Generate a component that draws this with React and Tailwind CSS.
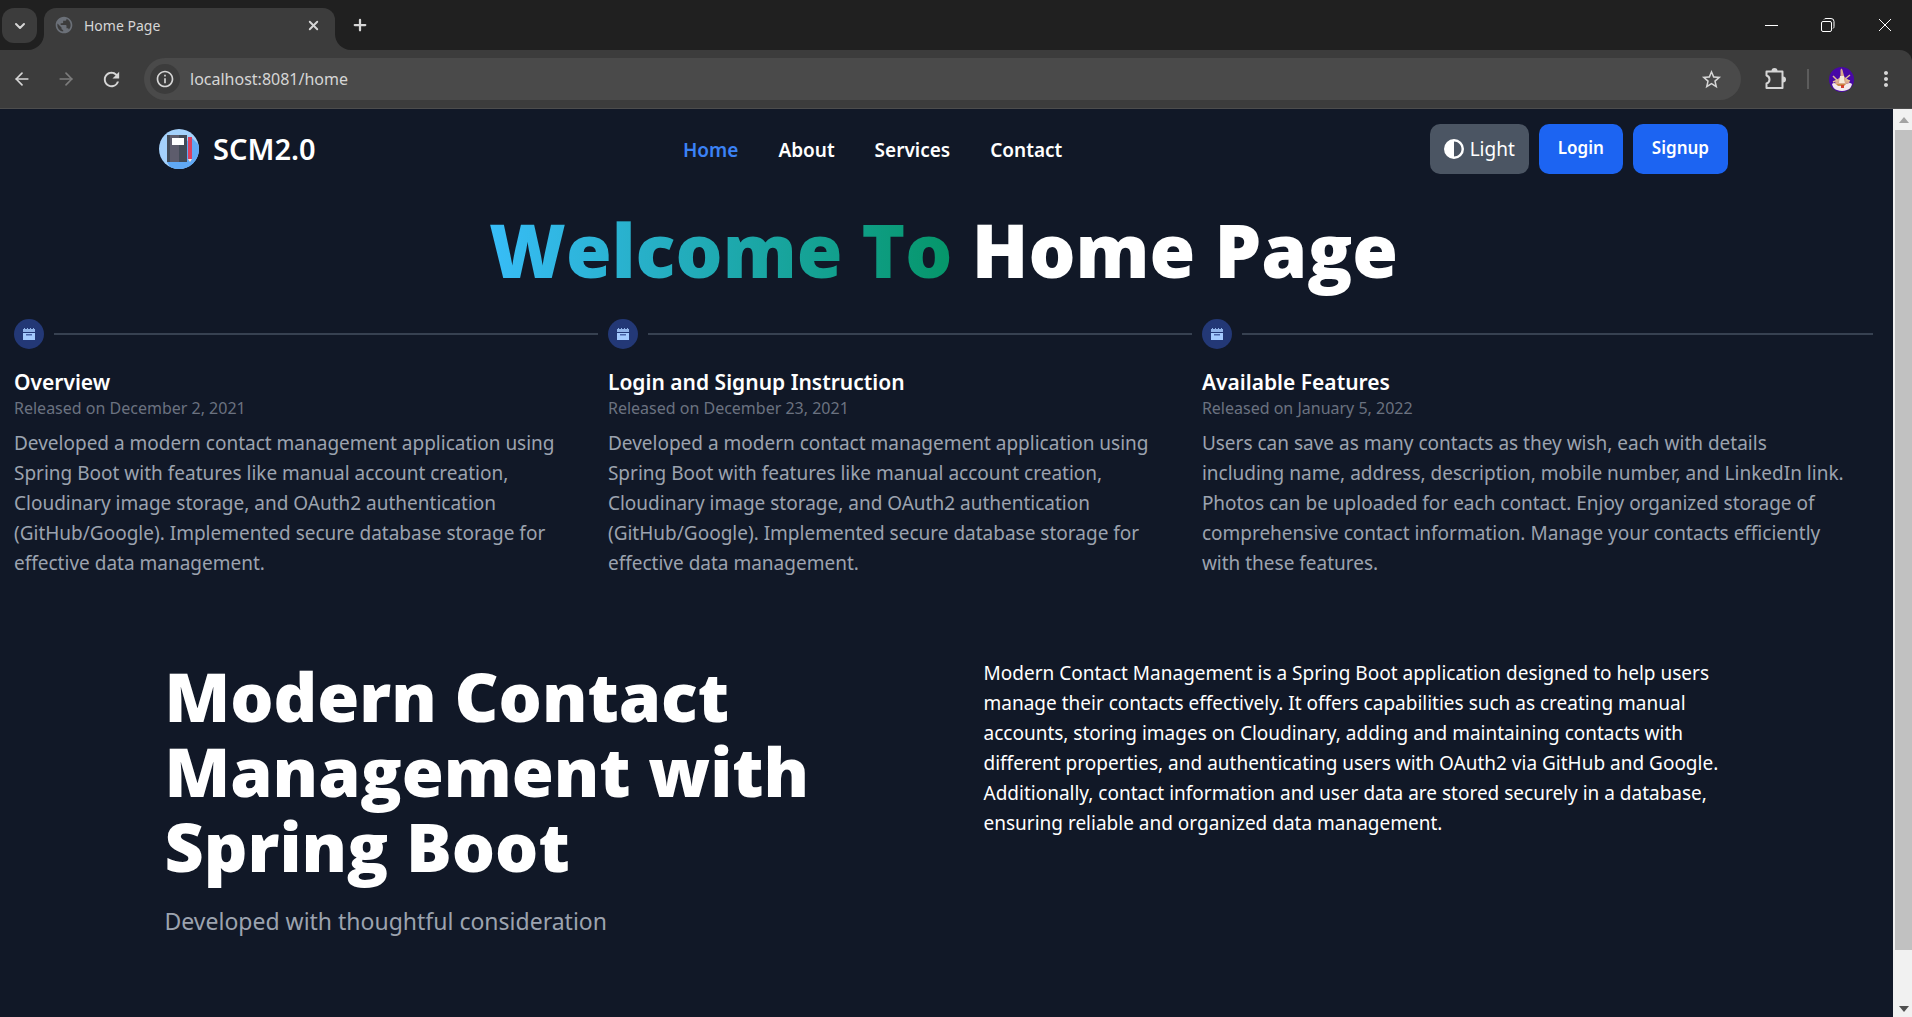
import { ChevronDown, X, Plus, ArrowLeft, ArrowRight } from "lucide-react";
import { MdRefresh, MdStarOutline, MdMoreVert, MdPublic, MdOutlineInfo } from "react-icons/md";
import { FaCircleHalfStroke } from "react-icons/fa6";

const developed =
  "Developed a modern contact management application using Spring Boot with features like manual account creation, Cloudinary image storage, and OAuth2 authentication (GitHub/Google). Implemented secure database storage for effective data management.";

const releases = [
  { title: "Overview", date: "Released on December 2, 2021", text: developed },
  { title: "Login and Signup Instruction", date: "Released on December 23, 2021", text: developed },
  {
    title: "Available Features",
    date: "Released on January 5, 2022",
    text: "Users can save as many contacts as they wish, each with details including name, address, description, mobile number, and LinkedIn link. Photos can be uploaded for each contact. Enjoy organized storage of comprehensive contact information. Manage your contacts efficiently with these features.",
  },
];

function Logo() {
  return (
    <svg viewBox="0 0 40 40" className="size-10" aria-hidden="true">
      <defs>
        <clipPath id="disc">
          <circle cx="20" cy="20" r="20" />
        </clipPath>
      </defs>
      <g clipPath="url(#disc)">
        <rect width="40" height="40" fill="#a4d1fb" />
        <path d="M32 8 40 16V40H12L8 33Z" fill="#60a9f6" />
        <rect x="8" y="6" width="20" height="27" fill="#434b57" />
        <rect x="11" y="6" width="9" height="27" fill="#5d5c6c" />
        <rect x="13" y="9" width="12" height="7" fill="#fff" />
        <rect x="29" y="8" width="4" height="22" fill="#db405f" />
        <path d="M29 30h4l-2 3Z" fill="#fbe6da" />
      </g>
    </svg>
  );
}

function Avatar() {
  return (
    <svg viewBox="0 0 25 25" className="size-[25px]" aria-hidden="true">
      <circle cx="12.5" cy="12.5" r="12.5" fill="#4808a6" />
      <path d="M3 17q2-2 5 0l9 0q4-2 6 0q-1 5-5 6-5 2-10 0-4-1-5-6Z" fill="#f3e9ee" />
      <path d="M11.500 3q1-3 2 0l1 4 1 3 4 3 1 3-7 2-8-1 2-4 4-3 0-4Z" fill="#dba98c" />
      <path d="M11 9h4v4l1 3h-6Z" fill="#f6ead8" />
      <path d="M4 9l4 4M21 8l-5 4M4 15l5-2M21 14l-4-1" stroke="#e0bf95" strokeWidth="1.500" />
      <path d="M7 17h10l-2 2H9Z" fill="#c98a45" />
      <rect x="12" y="18" width="3" height="3" fill="#d3402f" />
    </svg>
  );
}

function Extension() {
  return (
    <svg viewBox="0 0 24 24" className="size-6" fill="none" aria-hidden="true">
      <path
        d="M3.500 4.500H19.500V21H3.500V16.500Q6.500 15.500 6.500 12.500Q6.500 9.500 3.500 8.500Z"
        stroke="currentColor"
        strokeWidth="2"
        strokeLinejoin="round"
      />
      <path d="M8.500 4a3 3 0 0 1 6 0ZM20 9.500a3 3 0 0 1 0 6Z" fill="currentColor" />
    </svg>
  );
}

function Calendar() {
  return (
    <svg viewBox="0 0 12 12" className="size-3" fill="currentColor" aria-hidden="true">
      <path d="M0 4V1h1V0h1v1h2V0h1v1h2V0h1v1h2V0h1v1h1v3Z" opacity=".85" />
      <path d="M0 5h12v7H0Z" />
      <path d="M3 6h6v1.500H3Z" className="text-[#4a64a8]" />
    </svg>
  );
}

function WindowControls() {
  return (
    <div className="flex h-[50px] items-center gap-[41px] pr-[19px] text-white">
      <button aria-label="Minimize">
        <svg viewBox="0 0 16 16" className="size-4" stroke="currentColor" fill="none">
          <path d="M2 8.500h13" />
        </svg>
      </button>
      <button aria-label="Restore">
        <svg viewBox="0 0 16 16" className="size-4" stroke="currentColor" fill="none">
          <rect x="1.500" y="4.500" width="10" height="10" rx="1.500" />
          <path d="M4 2.500q.5-1 2-1h5q3 0 3 3v5q0 1.500-1 2" />
        </svg>
      </button>
      <button aria-label="Close">
        <svg viewBox="0 0 16 16" className="size-4" stroke="currentColor" fill="none">
          <path d="M2 2l12 12M14 2 2 14" />
        </svg>
      </button>
    </div>
  );
}

function Browser() {
  return (
    <header className="bg-[#202020] text-[#d6d6d6]">
      <div className="flex h-[50px] justify-between">
        <div className="flex">
          <div className="bg-[#3c3c3c]">
            <div className="h-[50px] w-11 rounded-br-2xl bg-[#202020] pt-2 pl-0.5">
              <button aria-label="Search tabs" className="flex size-[35px] items-center justify-center rounded-xl bg-[#3c3c3c]">
                <ChevronDown size={16} strokeWidth={3} />
              </button>
            </div>
          </div>
          <div className="mt-2 flex w-[291px] items-center rounded-t-xl bg-[#3c3c3c] pr-3 pb-2 pl-2.5">
            <MdPublic size={20} className="text-[#6b7078]" />
            <span className="ml-2.5 flex-1 text-[14px]">Home Page</span>
            <button aria-label="Close tab" className="p-0.5">
              <X size={15} strokeWidth={3} />
            </button>
          </div>
          <div className="bg-[#3c3c3c]">
            <div className="flex h-[50px] items-center rounded-bl-2xl bg-[#202020] pl-4">
              <button aria-label="New tab">
                <Plus size={18} strokeWidth={3} />
              </button>
            </div>
          </div>
        </div>
        <WindowControls />
      </div>
      <div className="flex h-[59px] items-center rounded-tr-xl border-b border-[#4d4d4d] bg-[#3c3c3c] pr-3.5 pl-3">
        <button aria-label="Back" className="mr-6">
          <ArrowLeft size={20} />
        </button>
        <button aria-label="Forward" className="mr-6 text-[#7c7c7c]">
          <ArrowRight size={20} />
        </button>
        <button aria-label="Reload" className="mr-[21px]">
          <MdRefresh size={23} />
        </button>
        <div className="flex h-[42px] flex-1 items-center rounded-full bg-[#4a4a4a] px-1.5">
          <button aria-label="Site information" className="flex size-[30px] items-center justify-center rounded-full bg-[#3c3c3c]">
            <MdOutlineInfo size={20} />
          </button>
          <input
            aria-label="Address"
            defaultValue="localhost:8081/home"
            className="ml-2.5 min-w-0 flex-1 bg-transparent text-[16px] outline-none"
          />
          <button aria-label="Bookmark" className="mr-3">
            <MdStarOutline size={23} />
          </button>
        </div>
        <button aria-label="Extensions" className="ml-[22px]">
          <Extension />
        </button>
        <span className="mx-5 h-5 w-0.5 bg-[#5c5c5c]" />
        <button aria-label="Profile">
          <Avatar />
        </button>
        <button aria-label="Menu" className="ml-5">
          <MdMoreVert size={24} />
        </button>
      </div>
    </header>
  );
}

function Scrollbar() {
  return (
    <div className="flex w-[19px] flex-col bg-[#f1f1f1] pl-0.5">
      <button aria-label="Scroll up" className="flex h-[21px] items-center justify-center text-[#a3a3a3]">
        <svg viewBox="0 0 10 6" className="h-1.5 w-2.5" fill="currentColor">
          <path d="M0 6 5 0l5 6Z" />
        </svg>
      </button>
      <div className="flex-[16] bg-[#c1c1c1]" />
      <div className="flex-1" />
      <button aria-label="Scroll down" className="flex h-4 items-center justify-center text-[#505050]">
        <svg viewBox="0 0 10 6" className="h-1.5 w-2.5" fill="currentColor">
          <path d="M0 0 5 6l5-6Z" />
        </svg>
      </button>
    </div>
  );
}

export default function App() {
  return (
    <div className="flex min-h-screen flex-col bg-[#111827] font-['Noto_Sans','Open_Sans',sans-serif] text-white">
      <Browser />
      <div className="flex flex-1">
        <main className="min-w-0 flex-1 pr-1.5">
          <nav className="mx-auto flex max-w-[1569px] items-center justify-between pt-[15px]">
            <a href="#" className="flex items-center gap-3.5">
              <Logo />
              <span className="text-[29px] leading-9 font-semibold">SCM2.0</span>
            </a>
            <div className="flex gap-10 pt-0.5 text-[19px] font-semibold">
              <a href="#" className="text-[#3b82f6]">Home</a>
              <a href="#">About</a>
              <a href="#">Services</a>
              <a href="#">Contact</a>
            </div>
            <div className="flex gap-2.5">
              <button className="flex h-[50px] items-center gap-1.5 rounded-[10px] bg-[#4b5563] px-3.5 text-[19px]">
                <FaCircleHalfStroke size={20} />
                Light
              </button>
              <button className="h-[50px] rounded-[10px] bg-[#1c64f2] px-[19px] pb-0.5 text-[17px] font-semibold">Login</button>
              <button className="h-[50px] rounded-[10px] bg-[#1c64f2] px-[19px] pb-0.5 text-[17px] font-semibold">Signup</button>
            </div>
          </nav>
          <h1 className="mt-[38px] text-center font-['Open_Sans','Noto_Sans',sans-serif] text-[74px] leading-[75px] font-black">
            <span className="bg-linear-to-r/srgb from-[#38bdf8] to-[#059669] bg-clip-text text-transparent">Welcome To</span> Home Page
          </h1>
          <ol className="mt-8 flex px-3.5">
            {releases.map((r) => (
              <li key={r.title} className="group flex-1 last:flex-[1.13]">
                <div className="flex items-center gap-2.5 pr-2.5 group-last:pr-0">
                  <span className="flex size-[30px] items-center justify-center rounded-full bg-[#233876] text-[#a4cafe]">
                    <Calendar />
                  </span>
                  <span className="h-0.5 flex-1 bg-[#374151]" />
                </div>
                <h3 className="mt-[19px] text-[21px] leading-7 font-semibold">{r.title}</h3>
                <time className="block text-[16px] leading-6 text-[#6b7280]">{r.date}</time>
                <p className="mt-2 pr-6 text-[19px] leading-[30px] text-[#9ca3af]">{r.text}</p>
              </li>
            ))}
          </ol>
          <section className="mx-auto mt-20 grid max-w-[1558px] grid-cols-[819px_1fr]">
            <div>
              <h2 className="font-['Open_Sans','Noto_Sans',sans-serif] text-[68px] leading-[75px] font-black">
                Modern Contact Management with Spring Boot
              </h2>
              <p className="mt-5 text-[23px] leading-9 text-[#9ca3af]">Developed with thoughtful consideration</p>
            </div>
            <p className="text-[19px] leading-[30px]">
              Modern Contact Management is a Spring Boot application designed to help users manage their contacts effectively. It offers
              capabilities such as creating manual accounts, storing images on Cloudinary, adding and maintaining contacts with
              different properties, and authenticating users with OAuth2 via GitHub and Google. Additionally, contact information and
              user data are stored securely in a database, ensuring reliable and organized data management.
            </p>
          </section>
        </main>
        <Scrollbar />
      </div>
    </div>
  );
}
